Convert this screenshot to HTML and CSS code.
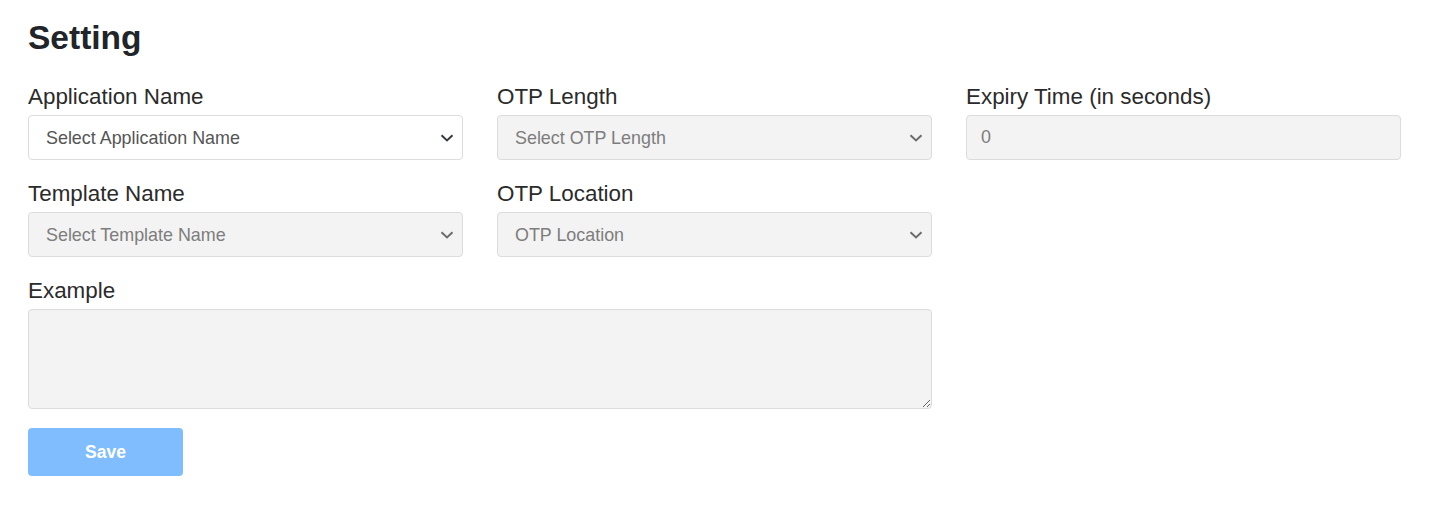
FILE: index.html
```html
<!DOCTYPE html>
<html lang="en">
<head>
<meta charset="utf-8">
<title>Setting</title>
<link rel="stylesheet" href="styles.css">
</head>
<body>
<main class="page">
  <h1 class="title">Setting</h1>
  <form class="form-grid">
    <div class="field">
      <label class="label">Application Name</label>
      <div class="select-wrap">
        <select class="control select"><option>Select Application Name</option></select>
        <svg class="chev" width="14" height="8" viewBox="0 0 14 8"><path d="M1.5 1.2 7 6.4 12.5 1.2" fill="none" stroke="#343a40" stroke-width="2"/></svg>
      </div>
    </div>
    <div class="field">
      <label class="label">OTP Length</label>
      <div class="select-wrap">
        <select class="control select" disabled><option>Select OTP Length</option></select>
        <svg class="chev" width="14" height="8" viewBox="0 0 14 8"><path d="M1.5 1.2 7 6.4 12.5 1.2" fill="none" stroke="#6c6c6c" stroke-width="2"/></svg>
      </div>
    </div>
    <div class="field">
      <label class="label">Expiry Time (in seconds)</label>
      <input class="control input" type="text" value="0" disabled>
    </div>
    <div class="field">
      <label class="label">Template Name</label>
      <div class="select-wrap">
        <select class="control select" disabled><option>Select Template Name</option></select>
        <svg class="chev" width="14" height="8" viewBox="0 0 14 8"><path d="M1.5 1.2 7 6.4 12.5 1.2" fill="none" stroke="#6c6c6c" stroke-width="2"/></svg>
      </div>
    </div>
    <div class="field">
      <label class="label">OTP Location</label>
      <div class="select-wrap">
        <select class="control select" disabled><option>OTP Location</option></select>
        <svg class="chev" width="14" height="8" viewBox="0 0 14 8"><path d="M1.5 1.2 7 6.4 12.5 1.2" fill="none" stroke="#6c6c6c" stroke-width="2"/></svg>
      </div>
    </div>
    <div class="field span2">
      <label class="label">Example</label>
      <textarea class="control textarea" disabled></textarea>
    </div>
    <div class="actions">
      <button type="button" class="btn-save" disabled>Save</button>
    </div>
  </form>
</main>
</body>
</html>
```
FILE: styles.css
```css
* { box-sizing: border-box; }
html, body { margin: 0; padding: 0; background: #fff; }
body { font-family: "Liberation Sans", Arial, sans-serif; color: #212529; }
.page { padding: 18px 31px 0 28px; }
.title {
  margin: 0 0 24px 0;
  font-size: 33.5px;
  line-height: 40px;
  font-weight: 700;
  color: #212529;
}
.form-grid {
  display: grid;
  grid-template-columns: 435px 435px 435px;
  column-gap: 34px;
  row-gap: 19px;
}
.field { display: flex; flex-direction: column; }
.span2 { grid-column: span 2; }
.label {
  font-size: 22.4px;
  line-height: 30px;
  margin-bottom: 3px;
  color: #2b2b2b;
}
.select-wrap { position: relative; }
.control {
  display: block;
  width: 100%;
  font-family: "Liberation Sans", Arial, sans-serif;
  font-size: 17.9px;
  border: 1px solid #dcdcdc;
  border-radius: 4px;
  background: #fff;
  color: #555;
  outline: none;
  margin: 0;
}
.select {
  height: 45px;
  padding: 0 40px 0 17px;
  appearance: none;
  -webkit-appearance: none;
  opacity: 1;
}
.control:disabled {
  background: #f3f3f3;
  color: #7d7d7d;
  opacity: 1;
}
.chev {
  position: absolute;
  right: 9px;
  top: 19px;
  pointer-events: none;
}
.input {
  height: 45px;
  padding: 0 14px;
}
.textarea {
  height: 100px;
  resize: both;
  padding: 8px 15px;
  max-width: 904px;
}
.actions { grid-column: 1 / -1; }
.btn-save {
  width: 155px;
  height: 48px;
  border: none;
  border-radius: 4px;
  background: #80bdff;
  color: #fff;
  font-family: "Liberation Sans", Arial, sans-serif;
  font-size: 17.5px;
  font-weight: 700;
  cursor: default;
}
```
